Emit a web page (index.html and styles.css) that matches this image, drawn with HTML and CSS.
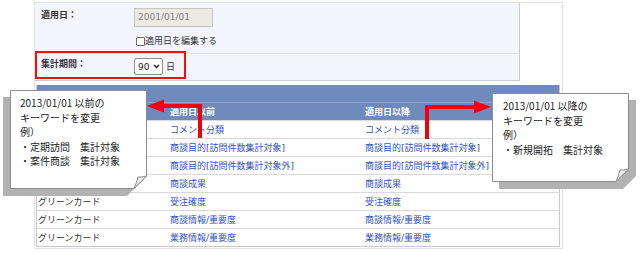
FILE: index.html
```html
<!DOCTYPE html>
<html lang="ja">
<head>
<meta charset="utf-8">
<title>キーワード設定</title>
<link rel="stylesheet" href="styles.css">
</head>
<body>
<div class="page">
  <div class="frame">
    <div class="panel">
      <div class="frow frow1">
        <div class="flabel">適用日：</div>
        <div class="fval">
          <div class="date-input">2001/01/01</div>
          <div class="chk"><span class="box"></span>適用日を編集する</div>
        </div>
      </div>
      <div class="frow frow2">
        <div class="flabel">集計期間：</div>
        <div class="fval fval2">
          <span class="select">90<svg class="chev" width="7" height="5" viewBox="0 0 7 5"><path d="M1 1 L3.5 3.6 L6 1" fill="none" stroke="#222" stroke-width="1.4"/></svg></span>
          <span class="unit">日</span>
        </div>
      </div>
      <div class="highlight"></div>
    </div>

    <div class="kw">
      <div class="krow khead1"><div></div><div></div><div></div></div>
      <div class="krow khead2"><div></div><div>適用日以前</div><div>適用日以降</div></div>
      <div class="krow"><div></div><div class="lk">コメント分類</div><div class="lk">コメント分類</div></div>
      <div class="krow"><div></div><div class="lk">商談目的[訪問件数集計対象]</div><div class="lk">商談目的[訪問件数集計対象]</div></div>
      <div class="krow"><div></div><div class="lk">商談目的[訪問件数集計対象外]</div><div class="lk">商談目的[訪問件数集計対象外]</div></div>
      <div class="krow"><div></div><div class="lk">商談成果</div><div class="lk">商談成果</div></div>
      <div class="krow"><div>グリーンカード</div><div class="lk">受注確度</div><div class="lk">受注確度</div></div>
      <div class="krow"><div>グリーンカード</div><div class="lk">商談情報/重要度</div><div class="lk">商談情報/重要度</div></div>
      <div class="krow"><div>グリーンカード</div><div class="lk">業務情報/重要度</div><div class="lk">業務情報/重要度</div></div>
    </div>
  </div>

  <svg class="arrows" width="640" height="253" viewBox="0 0 640 253">
    <polyline points="200,138 200,106 162,106" fill="none" stroke="#f0000f" stroke-width="4"/>
    <polygon points="164,99.5 164,112.5 147,106" fill="#f0000f"/>
    <polyline points="427,139 427,107 476,107" fill="none" stroke="#f0000f" stroke-width="4"/>
    <polygon points="474,100.5 474,113.5 491,107" fill="#f0000f"/>
  </svg>

  <div class="callout callout-left">
    <svg class="shape" width="145" height="107" viewBox="0 0 145 107">
      <polygon points="0,7 137,7 137,93 124,106 0,106" fill="#b2b2b2"/>
      <polygon points="7.5,0.5 143.5,0.5 143.5,86 131,98.5 7.5,98.5" fill="#fff" stroke="#8c8c8c"/>
      <path d="M143.5 86 Q138 87.5 135 87 Q133.5 93 131 98.5 Z" fill="#ececec" stroke="#8c8c8c" stroke-linejoin="round"/>
    </svg>
    <div class="ctext">2013/01/01 以前の<br>キーワードを変更<br>例）<br>・定期訪問　集計対象<br>・案件商談　集計対象</div>
  </div>

  <div class="callout callout-right">
    <svg class="shape" width="145" height="97" viewBox="0 0 145 97">
      <polygon points="7,7 144,7 144,83 131,96 7,96" fill="#b2b2b2"/>
      <polygon points="0.5,0.5 136.5,0.5 136.5,76 124,88.5 0.5,88.5" fill="#fff" stroke="#8c8c8c"/>
      <path d="M136.5 76 Q131 77.5 128 77 Q126.5 83 124 88.5 Z" fill="#ececec" stroke="#8c8c8c" stroke-linejoin="round"/>
    </svg>
    <div class="ctext">2013/01/01 以降の<br>キーワードを変更<br>例）<br>・新規開拓　集計対象</div>
  </div>
</div>
</body>
</html>
```

FILE: styles.css
```css
* { box-sizing: border-box; }
html, body { margin: 0; padding: 0; background: #fff; }
body {
  font-family: "DejaVu Sans", "Noto Sans CJK JP", sans-serif;
  font-size: 9px;
  color: #333;
}
.page { position: relative; width: 640px; height: 253px; overflow: hidden; }

.frame {
  margin: 2px 0 0 34px;
  width: 529px;
  height: 247px;
  border: 1px solid #e2e2e2;
}

.panel {
  position: relative;
  width: 485px;
  background: #f4f4fd;
  border-right: 1px solid #c9c9d8;
  border-bottom: 1px solid #c9c9d8;
}
.frow { display: flex; }
.frow1 { height: 51px; border-bottom: 1px solid #dcdcea; }
.frow2 { height: 26px; }
.flabel {
  width: 99px;
  padding-left: 6px;
  font-family: "Noto Sans CJK JP", sans-serif;
  font-weight: bold;
  line-height: 14px;
  color: #333;
}
.frow1 .flabel { padding-top: 5px; }
.frow2 .flabel { padding-top: 3px; }
.fval { padding-top: 5px; }
.date-input {
  width: 79px;
  height: 19px;
  background: #ebebe4;
  border: 1px solid #c6c6be;
  color: #808080;
  padding-left: 3px;
  line-height: 17px;
}
.chk {
  display: flex;
  align-items: center;
  margin-top: 8px;
  height: 12px;
  line-height: 12px;
  color: #333;
}
.chk .box {
  width: 9px;
  height: 9px;
  margin-left: 2px;
  background: #fff;
  border: 1px solid #6d6d6d;
  border-radius: 1px;
}
.fval2 { display: flex; align-items: center; padding-top: 4px; height: 21px; }
.select {
  display: flex;
  align-items: center;
  width: 29px;
  height: 17px;
  background: #fff;
  border: 1px solid #8e8e8e;
  border-radius: 2px;
  padding-left: 3px;
  color: #222;
}
.chev { margin-left: 4px; }
.unit { margin-left: 3px; color: #333; }
.highlight {
  position: absolute;
  left: 0;
  top: 48px;
  width: 151px;
  height: 28px;
  border: 2px solid #ee1111;
}

.kw {
  margin: 4px 0 0 1px;
  width: 524px;
  border: 1px solid #c8c8c8;
  border-top: none;
}
.krow {
  display: grid;
  grid-template-columns: 132px 195px 1fr;
  height: 18px;
  align-items: center;
  border-bottom: 1px solid #d9d9d9;
  white-space: nowrap;
  overflow: hidden;
}
.krow > div { padding-left: 1px; overflow: hidden; }
.krow:last-child { border-bottom: none; height: 17px; }
.khead1, .khead2 {
  background: #6e8bbb;
  color: #fff;
  font-family: "Noto Sans CJK JP", sans-serif;
  font-weight: bold;
}
.khead1 { border-bottom: 1px solid #8ea4cb; }
.khead2 { border-bottom: 1px solid #d9d9d9; }
.lk { color: #3153c2; }

.arrows { position: absolute; left: 0; top: 0; pointer-events: none; }

.callout { position: absolute; }
.callout .shape { position: absolute; left: 0; top: 0; }
.ctext {
  position: relative;
  font-family: "Noto Sans CJK JP", sans-serif;
  font-size: 10px;
  line-height: 14.5px;
  color: #222;
  white-space: nowrap;
}
.callout-left { left: 3px; top: 90px; width: 145px; height: 107px; }
.callout-left .ctext { padding: 6px 0 0 17px; }
.callout-right { left: 492px; top: 93px; width: 145px; height: 97px; }
.callout-right .ctext { padding: 6px 0 0 11px; }
```
